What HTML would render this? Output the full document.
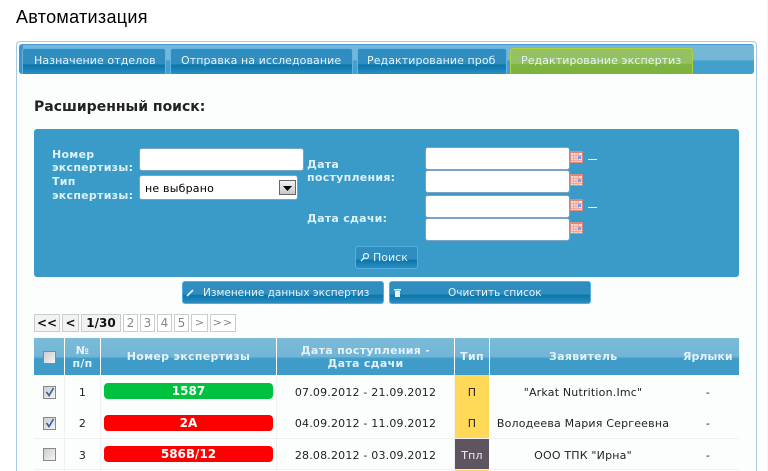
<!DOCTYPE html>
<html><head><meta charset="utf-8"><style>
html,body{margin:0;padding:0;width:768px;height:471px;overflow:hidden;background:#fff}
body{position:relative;font-family:"DejaVu Sans","Liberation Sans",sans-serif;font-size:11px;color:#222}
.a,.a *{box-sizing:border-box}
.a{position:absolute;white-space:nowrap}
.tab{top:48px;height:26px;border:1px solid #62b4e2;border-bottom:0;border-radius:3px 3px 0 0;background:linear-gradient(#2f8ebf 0,#2f8ebf 60%,#0a76ab 64%,#2c8ec0 100%);color:#e6f3f9;line-height:24px;padding-left:11px;letter-spacing:.07px}
.lab{color:#dcf0f8;font-weight:bold;line-height:13px;font-size:11px;letter-spacing:.27px}
.in{background:#fff;border:1px solid #7ba3c4;border-radius:3px}
.btn{border:1px solid #55addf;border-radius:3px;background:linear-gradient(#2f8ebf 0,#2f8ebf 58%,#0a76ab 62%,#2c8ec0 100%);color:#e6f3f9;text-align:left;font-size:10.5px}
.pg{top:314px;height:18px;border:1px solid #ccc;background:#fff;text-align:center;line-height:16px;color:#888;font-size:12px}
.pgb{color:#111;font-weight:bold;background:#f2f2f2;font-size:12px}
.th{top:338px;height:37px;background:linear-gradient(#7cbbd9 0,#72b5d5 50%,#3f9cc8 56%,#3f9cc8 100%);color:#e4f2f8;font-weight:bold;text-align:center;border-right:1px solid #fff;display:flex;align-items:center;justify-content:center;line-height:13px;white-space:normal;letter-spacing:.3px}
.pill{left:104px;width:169px;height:16px;border-radius:4px;color:#fff;font-weight:bold;text-align:center;line-height:16px;font-size:12px}
.c{text-align:center;color:#222;line-height:16px;letter-spacing:.19px}
.cb{left:43px;width:13px;height:13px;border:1px solid #888;background:linear-gradient(135deg,#ccc,#f6f6f6)}
.v{width:1px;background:#eef0f2;top:375px;height:96px}
.h{left:34px;width:705px;height:1px;background:#eef0f2}
</style></head><body>
<div class="a" style="left:16px;top:7px;font:18px/21px 'Liberation Sans',sans-serif;color:#000;letter-spacing:.3px">Автоматизация</div>

<div class="a" style="left:16px;top:41px;width:741px;height:440px;border:1px solid #a6c9e6;border-radius:4px;background:#fcfdfd"></div>
<div class="a" style="left:19px;top:44px;width:735px;height:30px;border-radius:3px;border-top:1px solid #4a9ad8;background:linear-gradient(#74b7d7 0,#74b7d7 50%,#43a0cc 56%,#43a0cc 100%)"></div>
<div class="a" style="left:19px;top:45px;width:4px;height:29px;background:#3f93cd;border-radius:3px 0 0 3px"></div>

<div class="a tab" style="left:22px;width:144px">Назначение отделов</div>
<div class="a tab" style="left:170px;width:183px;padding-left:10px">Отправка на исследование</div>
<div class="a tab" style="left:357px;width:150px;padding-left:9px">Редактирование проб</div>
<div class="a tab" style="left:510px;width:183px;border-color:#aed23c;background:linear-gradient(#94c164 0,#94c164 58%,#7eb33f 62%,#7eb33f 100%);padding-left:10px">Редактирование экспертиз</div>

<div class="a" style="left:34px;top:98px;font-weight:bold;font-size:14px;line-height:18px;color:#222">Расширенный поиск:</div>

<div class="a" style="left:34px;top:129px;width:705px;height:148px;border-radius:3px;background:#3b9bc8"></div>
<div class="a lab" style="left:52px;top:148px">Номер<br>экспертизы:</div>
<div class="a lab" style="left:52px;top:175px;line-height:14px">Тип<br>экспертизы:</div>
<div class="a in" style="left:139px;top:148px;width:165px;height:23px"></div>
<div class="a in" style="left:139px;top:175px;width:159px;height:25px;color:#000;line-height:25px;padding-left:5px;letter-spacing:.2px">не выбрано</div>
<div class="a" style="left:279px;top:180px;width:17px;height:15px;border:1px solid #666;background:linear-gradient(#f2f2f2,#c8c8c8)"></div>
<svg class="a" style="left:283px;top:186px" width="9" height="5"><path d="M0 0H9L4.5 5Z" fill="#000"/></svg>

<div class="a lab" style="left:307px;top:158px">Дата<br>поступления:</div>
<div class="a lab" style="left:307px;top:212px">Дата сдачи:</div>

<div class="a in" style="left:425px;top:147px;width:145px;height:23px"></div>
<div class="a in" style="left:425px;top:170px;width:145px;height:23px"></div>
<div class="a in" style="left:425px;top:195px;width:145px;height:23px"></div>
<div class="a in" style="left:425px;top:218px;width:145px;height:23px"></div>

<svg width="0" height="0" style="position:absolute"><defs><g id="cal"><rect width="13" height="12" fill="#d98a80"/><rect x="1" y="2" width="11" height="9" fill="#fbdcd6"/><path d="M1 4.500H12M1 7H12M1 9.500H12M3.500 2V11M6 2V11M8.500 2V11" stroke="#eda99f" stroke-width="1"/><rect x="8" y="5" width="3" height="3" fill="#7d9fe0"/></g></defs></svg>
<svg class="a" style="left:570px;top:151px" width="13" height="12"><use href="#cal"/></svg>
<svg class="a" style="left:570px;top:174px" width="13" height="12"><use href="#cal"/></svg>
<svg class="a" style="left:570px;top:199px" width="13" height="12"><use href="#cal"/></svg>
<svg class="a" style="left:570px;top:222px" width="13" height="12"><use href="#cal"/></svg>
<div class="a" style="left:588px;top:159px;width:9px;height:1px;background:#fff"></div>
<div class="a" style="left:588px;top:207px;width:9px;height:1px;background:#fff"></div>

<div class="a btn" style="left:355px;top:246px;width:63px;height:23px;line-height:21px;padding-left:17px;font-size:11px">Поиск</div>
<svg class="a" style="left:360px;top:252px" width="10" height="10"><circle cx="6" cy="4" r="2.500" fill="none" stroke="#e6f3f9" stroke-width="1.200"/><path d="M4 6L1 9" stroke="#e6f3f9" stroke-width="1.400"/></svg>

<div class="a btn" style="left:182px;top:281px;width:202px;height:23px;line-height:23px;padding-left:20px">Изменение данных экспертиз</div>
<svg class="a" style="left:186px;top:288px" width="9" height="9"><path d="M1 8L7 2" stroke="#e6f3f9" stroke-width="1.600"/></svg>
<div class="a btn" style="left:389px;top:281px;width:202px;height:23px;line-height:23px;padding-left:58px">Очистить список</div>
<svg class="a" style="left:394px;top:288px" width="8" height="10"><path d="M0 1H7V2.500H0ZM1 3H6V9H1Z" fill="#e6f3f9"/></svg>

<div class="a pg pgb" style="left:34px;width:26px">&lt;&lt;</div>
<div class="a pg pgb" style="left:62px;width:17px">&lt;</div>
<div class="a pg pgb" style="left:81px;width:40px">1/30</div>
<div class="a pg" style="left:123px;width:15px">2</div>
<div class="a pg" style="left:140px;width:15px">3</div>
<div class="a pg" style="left:157px;width:15px">4</div>
<div class="a pg" style="left:174px;width:15px">5</div>
<div class="a pg" style="left:191px;width:17px;font-size:11px">&gt;</div>
<div class="a pg" style="left:210px;width:26px;font-size:11px;letter-spacing:1px">&gt;&gt;</div>

<div class="a th" style="left:34px;width:31px"></div>
<div class="a cb" style="top:351px;background:linear-gradient(135deg,#ccc,#f6f6f6)"></div>
<div class="a th" style="left:65px;width:36px">№<br>п/п</div>
<div class="a th" style="left:101px;width:176px">Номер экспертизы</div>
<div class="a th" style="left:277px;width:178px">Дата поступления -<br>Дата сдачи</div>
<div class="a th" style="left:455px;width:35px">Тип</div>
<div class="a th" style="left:490px;width:249px;border-right:0;padding-right:0"><span style="position:absolute;left:59px">Заявитель</span><span style="position:absolute;left:193px;letter-spacing:0">Ярлыки</span></div>

<div class="a v" style="left:64px"></div>
<div class="a v" style="left:100px"></div>
<div class="a v" style="left:276px"></div>
<div class="a v" style="left:454px"></div>
<div class="a h" style="top:438px"></div>
<div class="a h" style="top:469px"></div>

<div class="a" style="left:455px;top:375px;width:34px;height:63px;background:#ffd957"></div>
<div class="a" style="left:455px;top:439px;width:34px;height:30px;background:#5e5560"></div>
<div class="a" style="left:455px;top:470px;width:34px;height:1px;background:#ffd957"></div>

<div class="a cb" style="top:386px"></div>
<svg class="a" style="left:45px;top:387px" width="10" height="10"><path d="M1.500 5L4 8.500L8.500 1" fill="none" stroke="#3d5fa8" stroke-width="1.700"/></svg>
<div class="a cb" style="top:417px"></div>
<svg class="a" style="left:45px;top:418px" width="10" height="10"><path d="M1.500 5L4 8.500L8.500 1" fill="none" stroke="#3d5fa8" stroke-width="1.700"/></svg>
<div class="a cb" style="top:448px"></div>

<div class="a c" style="left:65px;width:35px;top:385px">1</div>
<div class="a c" style="left:65px;width:35px;top:416px">2</div>
<div class="a c" style="left:65px;width:35px;top:448px">3</div>

<div class="a pill" style="top:383px;background:#00c13e">1587</div>
<div class="a pill" style="top:415px;background:#ff0000">2А</div>
<div class="a pill" style="top:446px;background:#ff0000">586В/12</div>

<div class="a c" style="left:277px;width:177px;top:385px">07.09.2012 - 21.09.2012</div>
<div class="a c" style="left:277px;width:177px;top:416px">04.09.2012 - 11.09.2012</div>
<div class="a c" style="left:277px;width:177px;top:448px">28.08.2012 - 03.09.2012</div>

<div class="a c" style="left:455px;width:34px;top:385px">П</div>
<div class="a c" style="left:455px;width:34px;top:416px">П</div>
<div class="a c" style="left:455px;width:34px;top:448px;color:#eee">Тпл</div>

<div class="a c" style="left:490px;width:186px;top:385px">"Arkat Nutrition.Imc"</div>
<div class="a c" style="left:490px;width:186px;top:416px">Володеева Мария Сергеевна</div>
<div class="a c" style="left:490px;width:186px;top:448px">ООО ТПК "Ирна"</div>

<div class="a c" style="left:698px;width:20px;top:385px">-</div>
<div class="a c" style="left:698px;width:20px;top:416px">-</div>
<div class="a c" style="left:698px;width:20px;top:448px">-</div>

<div class="a" style="left:767px;top:0;width:1px;height:471px;background:#f6f6f6"></div>
</body></html>
